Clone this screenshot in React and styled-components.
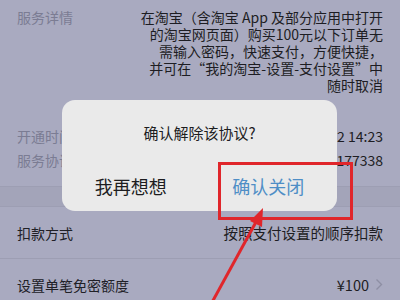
import styled, { createGlobalStyle } from "styled-components";

const GlobalStyle = createGlobalStyle`
  html, body {
    margin: 0;
    padding: 0;
  }
  body {
    width: 400px;
    height: 300px;
    overflow: hidden;
    background: #a9aac0;
    font-family: "Noto Sans CJK SC", "Liberation Sans", sans-serif;
  }
`;

const Page = styled.div`
  position: relative;
  width: 400px;
  height: 300px;
  overflow: hidden;
  background: #a9aac0;
`;

const Section = styled.div`
  padding: 9px 17px 14px;
  border-bottom: 1px solid #9d9eb3;
`;

const DetailRow = styled.div`
  display: flex;
  justify-content: space-between;
  align-items: flex-start;
  margin-bottom: 30px;
`;

const InfoRow = styled.div`
  display: flex;
  justify-content: space-between;
  align-items: center;
  height: 24px;
`;

const Label = styled.span`
  font-size: 14px;
  line-height: ${(p) => (p.$tall ? "17px" : "24px")};
  color: ${(p) => (p.$muted ? "#7b7c93" : "#202026")};
  white-space: nowrap;
`;

const Paragraph = styled.div`
  width: 250px;
  text-align: right;
  font-size: 14px;
  line-height: 17px;
  color: #1d1d23;
`;

const Value = styled.span`
  font-size: 14px;
  line-height: 24px;
  color: #1d1d23;
  white-space: nowrap;
`;

const Gap = styled.div`
  height: 19px;
  background: #a3a4b9;
  border-bottom: 1px solid #9d9eb3;
`;

const Row = styled.div`
  display: flex;
  justify-content: space-between;
  align-items: center;
  height: 51px;
  padding: 0 17px;
  border-bottom: 1px solid #9d9eb3;
`;

const RowValue = styled.span`
  display: flex;
  align-items: center;
  gap: 6px;
  font-size: 14.5px;
  color: #1d1d23;
`;

const Dialog = styled.div`
  position: absolute;
  left: 62px;
  top: 100px;
  width: 275px;
  height: 111px;
  background: #eaeaea;
  border-radius: 13px;
  display: flex;
  flex-direction: column;
`;

const DialogTitle = styled.div`
  padding-top: 22px;
  height: 40px;
  text-align: center;
  font-size: 15px;
  line-height: 22px;
  color: #1d1d1f;
`;

const Buttons = styled.div`
  flex: 1;
  display: grid;
  grid-template-columns: 1fr 1fr;
`;

const DialogButton = styled.div`
  display: flex;
  align-items: center;
  justify-content: center;
  font-size: 18px;
  padding-bottom: 2px;
  color: ${(p) => (p.$primary ? "#4f8ec6" : "#1d1d1f")};
`;

const Highlight = styled.div`
  position: absolute;
  left: 218px;
  top: 162px;
  width: 129px;
  height: 52px;
  border: 3px solid #e0262b;
`;

const Arrow = styled.svg`
  position: absolute;
  left: 0;
  top: 0;
  pointer-events: none;
`;

const Chevron = () => (
  <svg width="8" height="13" viewBox="0 0 8 13">
    <path d="M1.5 1.5 L6.5 6.5 L1.5 11.5" fill="none" stroke="#8e8fa3" strokeWidth="1.4" />
  </svg>
);

export default function App() {
  return (
    <Page>
      <GlobalStyle />
      <Section>
        <DetailRow>
          <Label $muted $tall>服务详情</Label>
          <Paragraph>
            在淘宝（含淘宝 App 及部分应用中打开
            <br />
            的淘宝网页面）购买100元以下订单无
            <br />
            需输入密码，快速支付，方便快捷，
            <br />
            并可在“我的淘宝-设置-支付设置”中
            <br />
            随时取消
          </Paragraph>
        </DetailRow>
        <InfoRow>
          <Label $muted>开通时间</Label>
          <Value>2018-06-12 14:23</Value>
        </InfoRow>
        <InfoRow>
          <Label $muted>服务协议号</Label>
          <Value>20180612177338</Value>
        </InfoRow>
      </Section>
      <Gap />
      <Row>
        <Label>扣款方式</Label>
        <RowValue>按照支付设置的顺序扣款</RowValue>
      </Row>
      <Row>
        <Label>设置单笔免密额度</Label>
        <RowValue>
          ¥100
          <Chevron />
        </RowValue>
      </Row>

      <Dialog>
        <DialogTitle>确认解除该协议?</DialogTitle>
        <Buttons>
          <DialogButton>我再想想</DialogButton>
          <DialogButton $primary>确认关闭</DialogButton>
        </Buttons>
      </Dialog>
      <Highlight />
      <Arrow width="400" height="300" viewBox="0 0 400 300">
        <line x1="210" y1="306" x2="256" y2="222" stroke="#e0262b" strokeWidth="3" />
        <polygon points="263,208 250,221 262,227" fill="#e0262b" />
      </Arrow>
    </Page>
  );
}
